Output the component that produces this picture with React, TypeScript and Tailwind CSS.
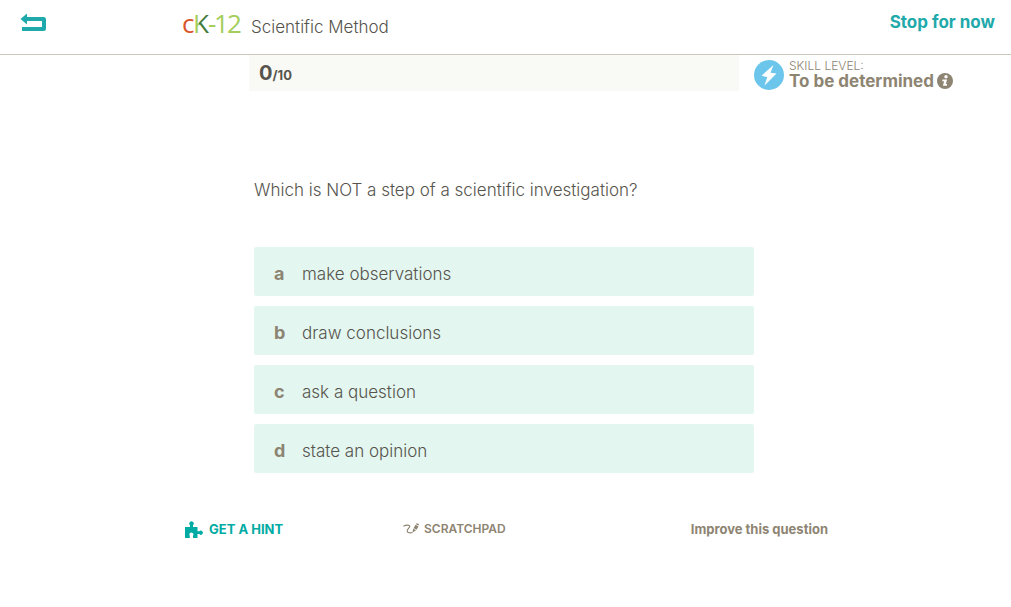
import { useState } from "react"

interface Choice {
  key: string
  text: string
}

const choices: Choice[] = [
  { key: "a", text: "make observations" },
  { key: "b", text: "draw conclusions" },
  { key: "c", text: "ask a question" },
  { key: "d", text: "state an opinion" },
]

function BackIcon() {
  return (
    <svg width="27" height="20" viewBox="0 0 27 20" aria-hidden="true">
      <path d="M.5 6 7 .5V4h16.500q2.500 0 2.500 2.500v9q0 2.500-2.500 2.500H2v-4h20V8H7v3.500Z" fill="#1fa9ab" />
    </svg>
  )
}

function BoltIcon() {
  return (
    <svg width="30" height="30" viewBox="0 0 30 30" aria-hidden="true">
      <circle cx="15" cy="15" r="15" fill="#6cc6ec" />
      <path d="M19.5 5 7.5 15.800l5.800 1.200L10.500 25.500 22.500 13.600l-6-.8Z" fill="#fff" />
    </svg>
  )
}

function InfoIcon() {
  return (
    <svg width="16" height="16" viewBox="0 0 16 16" aria-hidden="true">
      <circle cx="8" cy="8" r="8" fill="#8d8472" />
      <circle cx="9" cy="3.800" r="1.700" fill="#fff" />
      <path d="M5.500 6.500h4.600L8.900 11h1.300l-.4 1.800H5.900L7.100 8.300H5.200Z" fill="#fff" />
    </svg>
  )
}

function PuzzleIcon() {
  return (
    <svg width="18" height="17" viewBox="0 0 18 17" aria-hidden="true">
      <path
        d="M0 6h5V4.200a2.200 2.200 0 1 1 3 0V6h4.500v4.200h1.700a2.100 2.100 0 1 1 0 2.900h-1.700V17H8v-2.300a2 2 0 1 0-3.200 0V17H0Z"
        fill="#00aba4"
      />
    </svg>
  )
}

function ScratchIcon() {
  return (
    <svg width="16" height="12" viewBox="0 0 16 12" aria-hidden="true">
      <path
        d="M.4 3.300C3 1.800 7 1.700 6.800 3.400 6.600 5 3.700 6.500 4.200 8.300c.4 1.400 3.200 2 5.300 1.200"
        fill="none"
        stroke="#8d8472"
        strokeWidth="1.100"
      />
      <path d="m9.500 9.500.6-3.900 2.900 1.700Zm1.100-4.600 2-3.100 2.900 1.700-2 3.200ZM13 1.200l.4-.7q.3-.5.9-.2l1.300.8q.5.3.2.9l-.3.600Z" fill="#8d8472" />
    </svg>
  )
}

function Logo() {
  return (
    <a href="#home" aria-label="cK-12" className="block">
      <svg width="60" height="40" viewBox="0 0 60 40" className="font-['Open_Sans',sans-serif] text-[26px]">
        <defs>
          <linearGradient id="stem">
            <stop offset="0.35" stopColor="#a4cd5c" />
            <stop offset="0.35" stopColor="#417c3d" />
          </linearGradient>
        </defs>
        <text x="0" y="29" fill="#d9562b">c</text>
        <text x="11" y="29" fill="url(#stem)">K</text>
        <g fill="#a4cd5c">
          <text x="26" y="29">-</text>
          <text x="32" y="29">1</text>
          <text x="45" y="29">2</text>
        </g>
      </svg>
    </a>
  )
}

export default function App() {
  const [selected, setSelected] = useState<string | null>(null)

  return (
    <div className="min-h-screen bg-white font-[Inter,sans-serif] text-[#56544d]">
      <header className="grid h-[55px] grid-cols-[1fr_644px_1fr] border-b border-[#cdc8bc] pr-[3px]">
        <div className="pt-[13px] pl-5">
          <button type="button" aria-label="Back" className="block cursor-pointer">
            <BackIcon />
          </button>
        </div>
        <div className="flex items-start gap-[9px] pt-1">
          <Logo />
          <h1 className="pt-[9px] text-[17px] leading-7 font-light">Scientific Method</h1>
        </div>
        <div className="pt-2 pr-[13px] text-right">
          <button
            type="button"
            className="cursor-pointer text-[17px] leading-7 font-bold whitespace-nowrap text-[#1fa9ab]"
          >
            Stop for now
          </button>
        </div>
      </header>

      <section className="grid h-9 grid-cols-[1fr_490px_1fr] pr-[23px]">
        <div className="col-start-2 bg-[#f9f9f5] px-2.5 font-bold">
          <span className="text-xl leading-9">0</span>
          <span className="text-[13px]">/10</span>
        </div>
        <div className="flex items-start gap-[5px] pt-1 pl-[15px] text-[#8d8472]">
          <div className="shrink-0 pt-px">
            <BoltIcon />
          </div>
          <div className="whitespace-nowrap">
            <div className="text-xs leading-[14px] font-light">SKILL LEVEL:</div>
            <div className="flex items-center gap-[3px] text-[17px] leading-4 font-bold">
              To be determined
              <button type="button" aria-label="About skill level" className="cursor-pointer">
                <InfoIcon />
              </button>
            </div>
          </div>
        </div>
      </section>

      <main className="pr-[3px]">
        <div className="mx-auto max-w-[500px] pt-[85px]">
          <p className="text-[17px] leading-7 font-light">Which is NOT a step of a scientific investigation?</p>
          <div className="mt-[43px] space-y-2.5">
            {choices.map((choice) => (
              <button
                key={choice.key}
                type="button"
                aria-pressed={selected === choice.key}
                onClick={() => setSelected(choice.key)}
                className="flex h-[49px] w-full cursor-pointer items-baseline rounded-xs bg-[#e3f6f0] px-5 pt-[13px] text-left text-[17px] font-light"
              >
                <span className="w-7 text-lg font-bold text-[#8d8472]">{choice.key}</span>
                <span>{choice.text}</span>
              </button>
            ))}
          </div>
        </div>

        <div className="mx-auto mt-[46px] grid max-w-[650px] grid-cols-[218px_1fr_auto] items-center pr-px pl-1.5 text-[13px] leading-5 font-bold text-[#8d8472]">
          <button type="button" className="flex cursor-pointer items-center gap-1.5 text-[#00aba4]">
            <PuzzleIcon />
            GET A HINT
          </button>
          <button type="button" className="flex cursor-pointer items-center gap-[5px] text-xs font-semibold">
            <ScratchIcon />
            SCRATCHPAD
          </button>
          <button type="button" className="cursor-pointer">
            Improve this question
          </button>
        </div>
      </main>
    </div>
  )
}
